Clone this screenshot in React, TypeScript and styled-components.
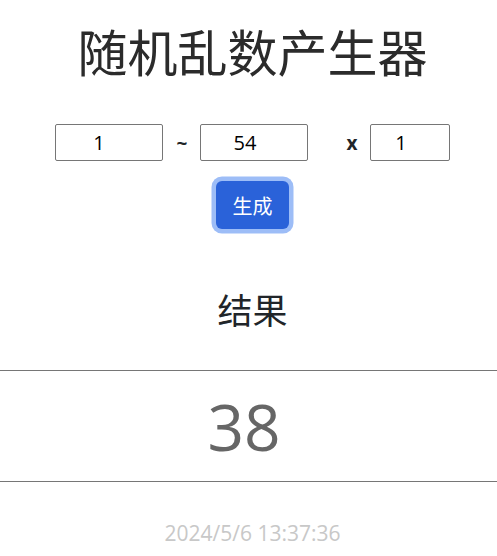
import React from "react";
import styled, { createGlobalStyle } from "styled-components";

const Global = createGlobalStyle`
  html, body { margin: 0; padding: 0; background: #fff; }
  body {
    font-family: "Open Sans", "Noto Sans CJK SC", sans-serif;
    color: #212529;
  }
`;

const Page = styled.div`
  display: flex;
  flex-direction: column;
  align-items: center;
  box-sizing: border-box;
  width: 100%;
  padding-left: 8px;
`;

const Title = styled.h1`
  margin: 15px 0 0;
  font-family: "Noto Sans CJK SC", sans-serif;
  font-weight: 400;
  font-size: 50px;
  line-height: 70px;
  color: #2b2b2b;
`;

const Controls = styled.div`
  display: flex;
  align-items: center;
  margin-top: 39px;
  height: 37px;
`;

const NumInput = styled.input<{ $w: number }>`
  box-sizing: border-box;
  width: ${(p) => p.$w}px;
  height: 37px;
  border: 1px solid #767676;
  border-radius: 2px;
  padding: 0 19px 0 0;
  text-align: center;
  font-family: "Open Sans", "Noto Sans", sans-serif;
  font-size: 20px;
  color: #000;
  outline: none;
  background: #fff;
`;

const Sep = styled.span<{ $l: number; $r: number }>`
  margin: 0 ${(p) => p.$r}px 0 ${(p) => p.$l}px;
  font-family: "Open Sans", "Noto Sans", sans-serif;
  font-weight: 700;
  font-size: 19px;
  color: #212529;
`;

const Button = styled.button`
  margin-top: 20px;
  width: 73px;
  height: 48px;
  border: none;
  border-radius: 6px;
  background: #2a62d9;
  color: #fff;
  font-family: "Noto Sans CJK SC", sans-serif;
  font-size: 20px;
  box-shadow: 0 0 0 4.5px #9dbdf7;
  cursor: pointer;
`;

const ResultLabel = styled.h2`
  margin: 56px 0 0;
  font-family: "Noto Sans CJK SC", sans-serif;
  font-weight: 400;
  font-size: 35px;
  line-height: 48px;
  color: #212529;
`;

const Rule = styled.hr`
  width: 100%;
  margin: 0;
  border: none;
  border-top: 1px solid #767676;
`;

const ResultBox = styled.div`
  align-self: stretch;
  margin: 37px 0 0 -8px;
  display: flex;
  flex-direction: column;
`;

const Number = styled.div`
  height: 110px;
  padding-right: 9px;
  display: flex;
  align-items: center;
  justify-content: center;
  font-family: "Open Sans", "Noto Sans", sans-serif;
  font-size: 64px;
  color: #666;
`;

const Stamp = styled.div`
  margin-top: 37px;
  font-family: "Open Sans", "Noto Sans", sans-serif;
  font-size: 21px;
  line-height: 29px;
  color: #c8c8c8;
`;

export default function App() {
  return (
    <>
      <Global />
      <Page>
        <Title>随机乱数产生器</Title>
        <Controls>
          <NumInput $w={108} defaultValue="1" />
          <Sep $l={14} $r={13}>~</Sep>
          <NumInput $w={108} defaultValue="54" />
          <Sep $l={38} $r={13}>x</Sep>
          <NumInput $w={80} defaultValue="1" />
        </Controls>
        <Button>生成</Button>
        <ResultLabel>结果</ResultLabel>
        <ResultBox>
          <Rule />
          <Number>38</Number>
          <Rule />
        </ResultBox>
        <Stamp>2024/5/6 13:37:36</Stamp>
      </Page>
    </>
  );
}
